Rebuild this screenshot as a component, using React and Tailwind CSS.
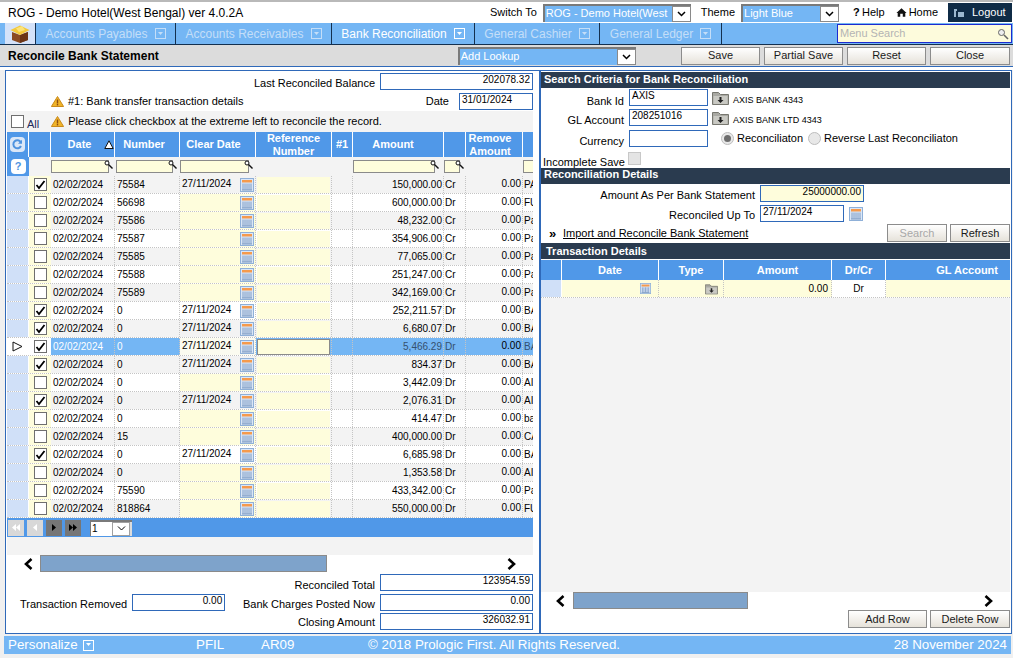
import React from 'react';

const ROWS = [
  { on: true, num: '75584', clear: true, amt: '150,000.00', dc: 'Cr', gl: 'PA' },
  { num: '56698', amt: '600,000.00', dc: 'Dr', gl: 'FU' },
  { num: '75586', amt: '48,232.00', dc: 'Cr', gl: 'Pa' },
  { num: '75587', amt: '354,906.00', dc: 'Cr', gl: 'Pa' },
  { num: '75585', amt: '77,065.00', dc: 'Cr', gl: 'Pa' },
  { num: '75588', amt: '251,247.00', dc: 'Cr', gl: 'Pa' },
  { num: '75589', amt: '342,169.00', dc: 'Cr', gl: 'Pa' },
  { on: true, num: '0', clear: true, amt: '252,211.57', dc: 'Dr', gl: 'BA' },
  { on: true, num: '0', clear: true, amt: '6,680.07', dc: 'Dr', gl: 'BA' },
  { on: true, num: '0', clear: true, amt: '5,466.29', dc: 'Dr', gl: 'BA', sel: true },
  { on: true, num: '0', clear: true, amt: '834.37', dc: 'Dr', gl: 'BA' },
  { num: '0', amt: '3,442.09', dc: 'Dr', gl: 'AI' },
  { on: true, num: '0', clear: true, amt: '2,076.31', dc: 'Dr', gl: 'AI' },
  { num: '0', amt: '414.47', dc: 'Dr', gl: 'ba' },
  { num: '15', amt: '400,000.00', dc: 'Dr', gl: 'CA' },
  { on: true, num: '0', clear: true, amt: '6,685.98', dc: 'Dr', gl: 'BA' },
  { num: '0', amt: '1,353.58', dc: 'Dr', gl: 'AI' },
  { num: '75590', amt: '433,342.00', dc: 'Cr', gl: 'Pa' },
  { num: '818864', amt: '550,000.00', dc: 'Dr', gl: 'FU' },
];

const MENU = [
  { label: 'Accounts Payables', w: 'w-[140px]', dim: true },
  { label: 'Accounts Receivables', w: 'w-[156px]', dim: true },
  { label: 'Bank Reconciliation', w: 'w-[143px]' },
  { label: 'General Cashier', w: 'w-[125px]', dim: true },
  { label: 'General Ledger', w: 'w-[122px]', dim: true },
];

const Caret = ({ dim }) => (
  <span className={`flex h-[11px] w-[11px] items-center justify-center border ${dim ? 'border-[#c4def8]' : 'border-white'}`}>
    <svg width="7" height="4" viewBox="0 0 7 4"><path d="M1 0h5L3.5 3z" fill={dim ? '#c4def8' : '#fff'} /></svg>
  </span>
);

const Warn = () => (
  <svg width="13" height="11" viewBox="0 0 13 11" className="shrink-0">
    <path d="M6.5.5 12.6 10.5H.4z" fill="#f0b429" stroke="#c98a1b" />
    <rect x="5.8" y="3.5" width="1.4" height="4" fill="#8a4b12" />
    <rect x="5.8" y="8" width="1.4" height="1.4" fill="#8a4b12" />
  </svg>
);

const Cal = ({ small }) => (
  <svg width={small ? 11 : 14} height={small ? 11 : 14} viewBox="0 0 14 14" className="shrink-0">
    <rect x=".5" y=".5" width="13" height="13" fill="#dbe7f7" stroke="#8fb0d8" />
    <rect x="2" y="2" width="10" height="2.5" fill="#f59a4c" />
    <path d="M3 5.5v6.5M5 5.5v6.5M7 5.5v6.5M9 5.5v6.5M11 5.5v6.5" stroke="#7f9cc4" />
    <rect x="2" y="11.5" width="10" height="1" fill="#7f9cc4" />
  </svg>
);

const Folder = ({ w = 17 }) => (
  <svg width={w} height="14" viewBox="0 0 17 14" className="shrink-0">
    <path d="M.5 13.5v-12h6l2 2h8v10z" fill="#a9a9a3" stroke="#77776f" />
    <path d="M1.5 5h14v8h-14z" fill="#c9c9c3" />
    <path d="M7.5 6h2v3h2l-3 3-3-3h2z" fill="#222" />
  </svg>
);

const Lens = () => (
  <svg width="9" height="9" viewBox="0 0 9 9" className="shrink-0">
    <circle cx="3" cy="3" r="2" fill="#fff" stroke="#111" />
    <path d="M4.5 4.5 8.5 8.5" stroke="#111" strokeWidth="1.4" />
  </svg>
);

const Check = ({ on, disabled }) => (
  <span className={`flex h-[13px] w-[13px] shrink-0 items-center justify-center border ${disabled ? 'border-[#c8c8c8] bg-[#e4e4e4]' : 'border-[#6f6f6f] bg-white'}`}>
    {on && (
      <svg width="11" height="10" viewBox="0 0 11 10"><path d="M1.5 5 4 8 9.5 1" fill="none" stroke="#000" strokeWidth="1.8" /></svg>
    )}
  </span>
);

const Btn = ({ children, w = 'w-[79px]', h = 'h-[18px]', dim }) => (
  <div className={`flex ${w} ${h} items-center justify-center border border-[#8c8c8c] bg-gradient-to-b from-white to-[#e6e2da] ${dim ? 'text-[#a8a8a8]' : 'text-[#1a1a1a]'}`}>
    {children}
  </div>
);

const Input = ({ w, value, right, bg = 'bg-white' }) => (
  <div className={`flex h-[17px] ${w} border border-[#2f69b9] ${bg} px-[2px] text-[10px] leading-[12px] ${right ? 'justify-end' : ''}`}>
    {value}
  </div>
);

const Select = ({ w, label, boxW = 'w-[19px]' }) => (
  <div className={`flex h-[18px] ${w} border-t-2 border-l-2 border-[#7a7a7a] bg-[#dcdcdc]`}>
    <div className="flex-1 overflow-hidden whitespace-nowrap bg-[#74b6f4] pl-[1px] leading-[15px] text-white">{label}</div>
    <div className={`flex ${boxW} items-center justify-center border border-[#8a8a8a] bg-white`}>
      <svg width="9" height="6" viewBox="0 0 9 6"><path d="M1 1l3.5 3.5L8 1" fill="none" stroke="#000" strokeWidth="1.5" /></svg>
    </div>
  </div>
);

const Head = ({ children, className = '' }) => (
  <div className={`flex h-[16px] shrink-0 items-center bg-[#2a3b4f] pl-[3px] text-[11px] font-bold text-white ${className}`}>{children}</div>
);

const Arrow = ({ dir }) => (
  <svg width="11" height="12" viewBox="0 0 11 12" className="shrink-0">
    <path d={dir === 'l' ? 'M8.5 1 3 6l5.5 5' : 'M2.5 1 8 6l-5.5 5'} fill="none" stroke="#000" strokeWidth="2.6" />
  </svg>
);

const PageBtn = ({ d, live }) => (
  <div className={`flex h-[16px] w-[16px] items-center justify-center ${live ? 'bg-[#767676]' : 'bg-[#d8d8d8]'}`}>
    <svg width="10" height="7" viewBox="0 0 10 7"><path d={d} fill={live ? '#000' : '#fff'} /></svg>
  </div>
);

const HCell = ({ w, children, className = '' }) => (
  <div className={`flex ${w} shrink-0 items-center justify-center border-r border-white text-center text-[11px] leading-[13px] font-bold text-white ${className}`}>
    {children}
  </div>
);

const FilterBox = ({ w }) => (
  <div className="flex items-end">
    <div className={`h-[13px] ${w} border border-[#8a8a8a] bg-[#fefddc]`} />
    <div className="-ml-[5px] -translate-y-[4px]"><Lens /></div>
  </div>
);

const GridRow = ({ r, i }) => {
  const cell = 'flex shrink-0 items-center border-r border-dotted border-[#c4c4c4]';
  const alt = r.sel ? 'bg-[#74b6f4]' : i % 2 === 0 ? 'bg-[#f3f3f3]' : 'bg-white';
  const clearBg = r.sel ? 'bg-[#fbfbf0]' : r.clear ? alt : 'bg-[#fefddc]';
  return (
    <div className="flex h-[18px] border-b border-dotted border-[#c4c4c4] text-[10px]">
      <div className={`flex w-[22px] shrink-0 items-center justify-center border-r border-white ${r.sel ? 'bg-white' : 'bg-[#d0e0f8]'}`}>
        {r.sel && (
          <svg width="11" height="11" viewBox="0 0 11 11"><path d="M1 1v9l9-4.500z" fill="#fff" stroke="#111" /></svg>
        )}
      </div>
      <div className={`flex w-[22px] shrink-0 items-center justify-center ${r.sel ? 'bg-white' : 'bg-[#fefddc]'}`}>
        <Check on={r.on} />
      </div>
      <div className={`${cell} w-[64px] pl-[2px] ${alt} ${r.sel ? 'text-white' : ''}`}>02/02/2024</div>
      <div className={`${cell} w-[65px] pl-[2px] ${alt} ${r.sel ? 'text-white' : ''}`}>{r.num}</div>
      <div className={`${cell} w-[76px] justify-between pr-[1px] pl-[2px] ${clearBg}`}>
        <span className="-translate-y-[1px]">{r.clear ? '27/11/2024' : ''}</span>
        <Cal />
      </div>
      <div className={`${cell} w-[76px] ${alt} px-[1px]`}>
        <div className={`h-[16px] w-full bg-[#fefddc] ${r.sel ? 'border border-[#8a8a8a]' : ''}`} />
      </div>
      <div className={`${cell} w-[21px] ${alt}`} />
      <div className={`${cell} w-[91px] justify-end pr-[1px] ${alt} ${r.sel ? 'text-[#34506e]' : ''}`}>{r.amt}</div>
      <div className={`${cell} w-[22px] pl-[1px] ${alt} ${r.sel ? 'text-[#34506e]' : ''}`}>{r.dc}</div>
      <div className={`${cell} w-[57px] justify-end pr-[1px] ${alt}`}><span className="-translate-y-[1px]">0.00</span></div>
      <div className={`flex w-[10px] shrink-0 items-center overflow-hidden pl-[1px] ${alt} ${r.sel ? 'text-[#34506e]' : ''}`}>{r.gl}</div>
    </div>
  );
};

const LeftPanel = () => (
  <div className="flex h-[564px] w-[535px] shrink-0 flex-col border border-[#2f69b9] bg-white pl-[1px]">
    <div className="flex h-[21px] shrink-0 items-start justify-end pt-[2px] pr-[6px]">
      <span className="mt-[2px] mr-[5px]">Last Reconciled Balance</span>
      <Input w="w-[153px]" value="202078.32" right />
    </div>
    <div className="flex h-[19px] shrink-0 items-center pr-[6px]">
      <div className="ml-[44px]"><Warn /></div>
      <span className="ml-[4px]">#1: Bank transfer transaction details</span>
      <span className="mr-[10px] ml-auto">Date</span>
      <Input w="w-[74px]" value="31/01/2024" />
    </div>
    <div className="flex h-[21px] w-[526px] shrink-0 items-center bg-[#f3f3f3]">
      <div className="ml-[4px]"><Check /></div>
      <span className="mt-[5px] ml-[3px] text-[#222a5a]">All</span>
      <div className="ml-[12px]"><Warn /></div>
      <span className="ml-[4px]">Please click checkbox at the extreme left to reconcile the record.</span>
    </div>

    <div className="flex h-[25px] w-[526px] shrink-0 bg-[#5098e8]">
      <HCell w="w-[22px]">
        <span className="flex h-[15px] w-[15px] items-center justify-center rounded-sm bg-[#dbe7f7]">
          <svg width="11" height="11" viewBox="0 0 11 11"><path d="M8.800 3.200A4 4 0 1 0 9 7" fill="none" stroke="#4f93df" strokeWidth="2" /><path d="M10 .8v4H6z" fill="#4f93df" /></svg>
        </span>
      </HCell>
      <HCell w="w-[22px]" />
      <HCell w="w-[64px]" className="relative pr-[6px]">
        Date
        <svg width="10" height="9" viewBox="0 0 10 9" className="absolute right-[0px] top-[8px]"><path d="M5 .8 9.200 8.500H.8z" fill="#fff" stroke="#111" /></svg>
      </HCell>
      <HCell w="w-[65px]" className="pr-[6px]">Number</HCell>
      <HCell w="w-[76px]" className="pr-[8px]">Clear Date</HCell>
      <HCell w="w-[76px]">Reference<br />Number</HCell>
      <HCell w="w-[21px]">#1</HCell>
      <HCell w="w-[91px]" className="pr-[10px]">Amount</HCell>
      <HCell w="w-[22px]" />
      <HCell w="w-[57px]" className="pr-[8px]">Remove<br />Amount</HCell>
      <div className="w-[10px]" />
    </div>

    <div className="flex h-[19px] w-[526px] shrink-0 items-center bg-[#f3f3f3]">
      <div className="flex h-full w-[22px] shrink-0 items-center justify-center bg-[#5098e8]">
        <span className="flex h-[15px] w-[15px] items-center justify-center rounded-sm bg-white text-[11px] font-bold text-[#4f93df]">?</span>
      </div>
      <div className="w-[22px] shrink-0" />
      <div className="w-[65px] shrink-0"><FilterBox w="w-[58px]" /></div>
      <div className="w-[64px] shrink-0"><FilterBox w="w-[57px]" /></div>
      <div className="w-[76px] shrink-0"><FilterBox w="w-[69px]" /></div>
      <div className="w-[97px] shrink-0" />
      <div className="w-[91px] shrink-0"><FilterBox w="w-[82px]" /></div>
      <div className="w-[22px] shrink-0"><FilterBox w="w-[16px]" /></div>
      <div className="w-[57px] shrink-0" />
      <div className="h-[13px] w-[10px] border border-r-0 border-[#8a8a8a] bg-[#fefddc]" />
    </div>

    <div className="w-[526px] shrink-0">
      {ROWS.map((r, i) => <GridRow key={i} r={r} i={i} />)}
    </div>

    <div className="flex h-[19px] w-[526px] shrink-0 items-center gap-[3px] bg-[#5098e8] pl-[1px]">
      <PageBtn d="M5 0v7L1 3.500zM9 0v7L5 3.500z" />
      <PageBtn d="M7 0v7L3 3.500z" />
      <PageBtn d="M3 0v7l4-3.500z" live />
      <PageBtn d="M1 0v7l4-3.500zM5 0v7l4-3.500z" live />
      <div className="ml-[6px] flex h-[16px] w-[42px] border-t-2 border-l border-[#7a7a7a] bg-[#dcdcdc] text-[10px]">
        <div className="w-[21px] bg-white pl-[1px] leading-[14px]">1</div>
        <div className="flex w-[18px] items-center justify-center border border-[#a0a0a0] bg-white">
          <svg width="9" height="5" viewBox="0 0 9 5"><path d="M1 .5 4.500 4 8 .5" fill="none" stroke="#000" /></svg>
        </div>
      </div>
    </div>
    <div className="h-[18px] w-[526px] shrink-0 bg-[#f3f3f3]" />

    <div className="flex h-[17px] w-[526px] shrink-0 items-center">
      <div className="ml-[16px]"><Arrow dir="l" /></div>
      <div className="ml-[6px] h-[17px] w-[287px] border border-[#8a8a8a] bg-[#7ea3cb]" />
      <div className="ml-[179px]"><Arrow dir="r" /></div>
    </div>

    <div className="mt-[2px] flex h-[17px] w-[526px] shrink-0 items-center justify-end">
      <span className="mr-[5px] translate-y-[3px]">Reconciled Total</span>
      <Input w="w-[153px]" value="123954.59" right />
    </div>
    <div className="mt-[3px] flex h-[17px] w-[526px] shrink-0 items-center">
      <span className="ml-[13px] translate-y-[2px]">Transaction Removed</span>
      <div className="ml-[5px]"><Input w="w-[93px]" value="0.00" right /></div>
      <span className="mr-[5px] ml-auto translate-y-[2px]">Bank Charges Posted Now</span>
      <Input w="w-[153px]" value="0.00" right />
    </div>
    <div className="mt-[2px] flex h-[17px] w-[526px] shrink-0 items-center justify-end">
      <span className="mr-[5px] translate-y-[1px]">Closing Amount</span>
      <Input w="w-[153px]" value="326032.91" right />
    </div>
  </div>
);

const RightPanel = () => (
  <div className="flex h-[564px] w-[472px] shrink-0 flex-col border border-[#2f69b9] bg-white pt-[1px] pr-[1px]">
    <Head className="pb-[2px]">Search Criteria for Bank Reconciliation</Head>

    <div className="mt-[1px] flex h-[17px] shrink-0 items-center">
      <span className="w-[83px] translate-y-[4px] text-right">Bank Id</span>
      <div className="ml-[5px]"><Input w="w-[79px]" value="AXIS" /></div>
      <div className="ml-[4px]"><Folder /></div>
      <span className="ml-[4px] translate-y-[3px] text-[9px]">AXIS BANK 4343</span>
    </div>
    <div className="mt-[3px] flex h-[17px] shrink-0 items-center">
      <span className="w-[83px] translate-y-[3px] text-right">GL Account</span>
      <div className="ml-[5px]"><Input w="w-[79px]" value="208251016" /></div>
      <div className="ml-[4px]"><Folder /></div>
      <span className="ml-[4px] translate-y-[3px] text-[9px]">AXIS BANK LTD 4343</span>
    </div>
    <div className="mt-[4px] flex h-[17px] shrink-0 items-center">
      <span className="w-[83px] translate-y-[3px] text-right">Currency</span>
      <div className="ml-[5px]"><Input w="w-[79px]" /></div>
      <span className="ml-[13px] flex h-[13px] w-[13px] items-center justify-center rounded-full border border-[#bdbdbd] bg-[#e8e8e8]">
        <span className="h-[7px] w-[7px] rounded-full bg-[#6d6d6d]" />
      </span>
      <span className="ml-[3px]">Reconciliaton</span>
      <span className="ml-[5px] h-[13px] w-[13px] rounded-full border border-[#bdbdbd] bg-[#e8e8e8]" />
      <span className="ml-[3px]">Reverse Last Reconciliaton</span>
    </div>
    <div className="mt-[4px] flex h-[17px] shrink-0 items-start">
      <span className="ml-[2px] w-[81px] pt-[3px] whitespace-nowrap">Incomplete Save</span>
      <div className="mt-[1px] ml-[4px]"><Check disabled /></div>
    </div>

    <Head className="pb-[3px]">Reconciliation Details</Head>
    <div className="mt-[1px] flex h-[17px] shrink-0 items-center">
      <span className="w-[214px] translate-y-[2px] text-right">Amount As Per Bank Statement</span>
      <div className="ml-[5px]"><Input w="w-[104px]" value="25000000.00" right bg="bg-[#fefddc]" /></div>
    </div>
    <div className="mt-[3px] flex h-[17px] shrink-0 items-center">
      <span className="w-[214px] translate-y-[2px] text-right">Reconciled Up To</span>
      <div className="ml-[5px]"><Input w="w-[84px]" value="27/11/2024" /></div>
      <div className="ml-[5px]"><Cal /></div>
    </div>
    <div className="mt-[2px] flex h-[18px] shrink-0 items-center">
      <span className="ml-[8px] w-[14px] text-[13px] leading-none font-bold">»</span>
      <span className="underline">Import and Reconcile Bank Statement</span>
      <div className="ml-auto flex gap-[3px]">
        <Btn w="w-[60px]" dim>Search</Btn>
        <Btn w="w-[60px]">Refresh</Btn>
      </div>
    </div>
    <div className="mt-[1px]"><Head><span className="pl-[2px]">Transaction Details</span></Head></div>

    <div className="mt-[1px] flex h-[20px] shrink-0 bg-[#5098e8]">
      <HCell w="w-[21px]" />
      <HCell w="w-[97px]">Date</HCell>
      <HCell w="w-[65px]">Type</HCell>
      <HCell w="w-[108px]">Amount</HCell>
      <HCell w="w-[54px]">Dr/Cr</HCell>
      <div className="flex flex-1 items-center justify-end pr-[12px] text-[11px] font-bold text-white">GL Account</div>
    </div>
    <div className="flex h-[18px] shrink-0 border-b border-dotted border-[#c4c4c4] text-[10px]">
      <div className="w-[21px] shrink-0 border-r border-white bg-[#d0e0f8]" />
      <div className="flex w-[97px] shrink-0 items-center justify-end border-r border-dotted border-[#c4c4c4] bg-[#fefddc] pr-[7px]"><Cal small /></div>
      <div className="flex w-[65px] shrink-0 items-center justify-end border-r border-dotted border-[#c4c4c4] bg-[#fefddc] pr-[5px]"><Folder w={13} /></div>
      <div className="flex w-[108px] shrink-0 items-center justify-end border-r border-dotted border-[#c4c4c4] bg-[#fefddc] pr-[3px]">0.00</div>
      <div className="flex w-[54px] shrink-0 items-center justify-center border-r border-dotted border-[#c4c4c4] bg-white">Dr</div>
      <div className="flex-1 bg-[#fefddc]" />
    </div>
    <div className="flex-1 bg-[#f3f3f3]" />

    <div className="flex h-[17px] shrink-0 items-center">
      <div className="ml-[14px]"><Arrow dir="l" /></div>
      <div className="ml-[7px] h-[17px] w-[175px] border border-[#8a8a8a] bg-[#7ea3cb]" />
      <div className="ml-[235px]"><Arrow dir="r" /></div>
    </div>
    <div className="mt-[1px] mb-[5px] flex shrink-0 justify-end gap-[3px]">
      <Btn>Add Row</Btn>
      <Btn w="w-[80px]">Delete Row</Btn>
    </div>
  </div>
);

export default function App() {
  return (
    <div className="flex h-[658px] w-[1013px] flex-col overflow-hidden bg-[#f0f0f0] font-['Liberation_Sans',Arial,sans-serif] text-[11px] text-black">
      <div className="h-[2px] shrink-0 bg-[#b9b9b9]" />

      <div className="flex h-[21px] shrink-0 items-center bg-white pr-[1px] pl-[8px]">
        <span className="text-[12px]">ROG - Demo Hotel(West Bengal) ver 4.0.2A</span>
        <span className="ml-auto">Switch To</span>
        <div className="ml-[6px]"><Select w="w-[148px]" label="ROG - Demo Hotel(West" /></div>
        <span className="ml-[10px]">Theme</span>
        <div className="ml-[6px]"><Select w="w-[98px]" label="Light Blue" /></div>
        <span className="ml-[14px] w-[9px] font-bold">?</span>
        <span>Help</span>
        <svg width="11" height="11" viewBox="0 0 13 12" className="ml-[11px]"><path d="M6.500 1 12.500 6.500H11V11H8V7.500H5V11H2V6.500H.5z" fill="#111" /></svg>
        <span className="ml-[2px]">Home</span>
        <div className="ml-[10px] flex h-[19px] w-[64px] items-center bg-[#0f2b46] pl-[5px] text-white">
          <svg width="12" height="12" viewBox="0 0 12 12"><path d="M1 2h3v2H3v6H1z" fill="#9bb7cf" /><rect x="5" y="5" width="6" height="5" fill="#9bb7cf" /></svg>
          <span className="ml-[7px]">Logout</span>
        </div>
      </div>

      <div className="flex h-[22px] shrink-0 border-b border-[#14304f] bg-[#74b6f4] pr-[1px] pl-[5px]">
        <div className="flex w-[31px] shrink-0 items-center justify-center border-r border-[#14304f] bg-[#d4e2f9]">
          <svg width="22" height="20" viewBox="0 0 22 20">
            <path d="M3 8 11 11 19 8V16L11 19 3 16z" fill="#8a4a22" />
            <path d="M11 11V19L19 16V8z" fill="#6b3516" />
            <path d="M1.500 6 11 1.500 20.500 6 11 11z" fill="#f4c93a" />
            <path d="M7 4.500 13 2 16 6 10 8z" fill="#fbe37a" />
          </svg>
        </div>
        {MENU.map((m) => (
          <div key={m.label} className={`flex ${m.w} shrink-0 items-center justify-center gap-[7px] border-r border-[#14304f] text-[12px] ${m.dim ? 'text-[#c4def8]' : 'text-white'}`}>
            {m.label}
            <Caret dim={m.dim} />
          </div>
        ))}
        <div className="mt-[1px] ml-auto flex h-[19px] w-[175px] items-center justify-between border border-[#1c2bd0] bg-[#fdfbdc] px-[2px] text-[#b4b4b4]">
          Menu Search
          <svg width="12" height="12" viewBox="0 0 12 12"><circle cx="4.500" cy="4.500" r="3" fill="#eee" stroke="#666" /><path d="M7 7l4 4" stroke="#666" strokeWidth="1.600" /></svg>
        </div>
      </div>

      <div className="flex h-[22px] shrink-0 items-center border-b border-[#2f69b9] bg-[#dcdcdc] pr-[3px] pl-[8px]">
        <span className="text-[12px] font-bold">Reconcile Bank Statement</span>
        <div className="ml-[299px]"><Select w="w-[178px]" label="Add Lookup" /></div>
        <div className="ml-auto flex gap-[4px]">
          <Btn>Save</Btn>
          <Btn>Partial Save</Btn>
          <Btn>Reset</Btn>
          <Btn w="w-[80px]">Close</Btn>
        </div>
      </div>

      <div className="h-[3px] shrink-0 bg-white" />
      <div className="flex shrink-0 pl-[5px]">
        <LeftPanel />
        <RightPanel />
      </div>

      <div className="mt-[2px] ml-[4px] flex h-[18px] w-[1007px] shrink-0 items-center bg-[#74b6f4] px-[4px] text-[13.33px] text-white">
        <span className="flex w-[188px] items-center gap-[5px]">Personalize <Caret /></span>
        <span className="w-[65px]">PFIL</span>
        <span className="w-[107px]">AR09</span>
        <span>© 2018 Prologic First. All Rights Reserved.</span>
        <span className="ml-auto">28 November 2024</span>
      </div>
    </div>
  );
}
